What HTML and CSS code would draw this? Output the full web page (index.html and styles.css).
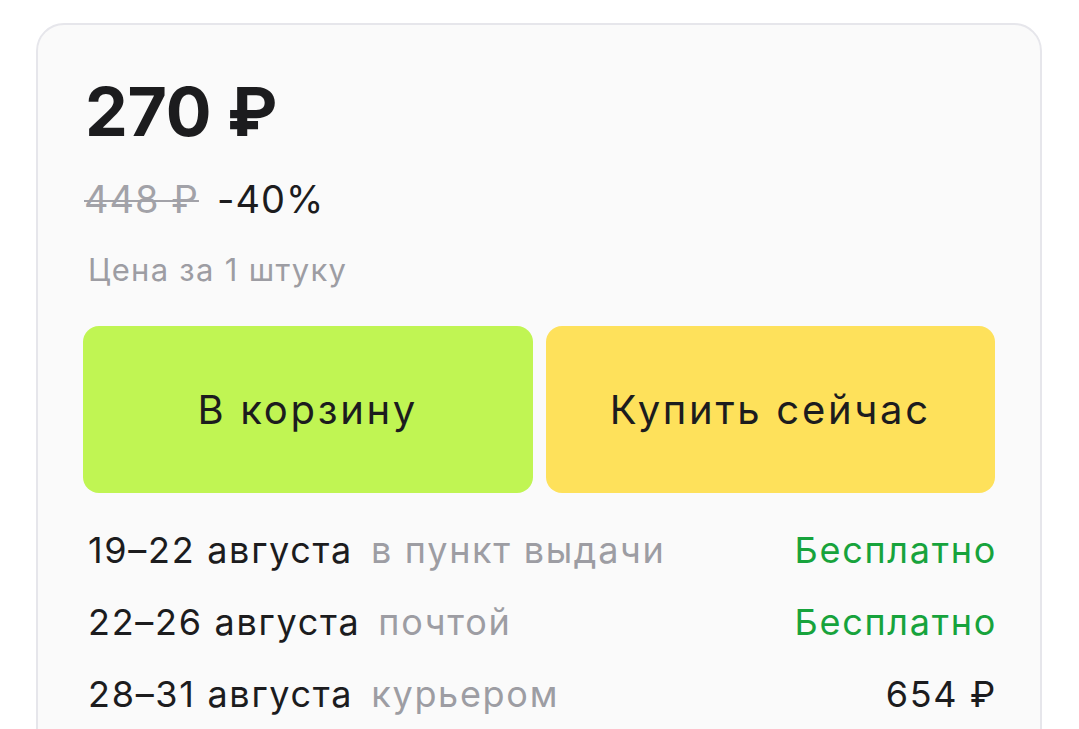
FILE: index.html
```html
<!DOCTYPE html>
<html lang="ru">
<head>
<meta charset="utf-8">
<title>Цена</title>
<link rel="stylesheet" href="styles.css">
</head>
<body>
<div class="card">
  <div class="price">270 ₽</div>
  <div class="old-row">
    <span class="old">448 ₽</span>
    <span class="discount">-40%</span>
  </div>
  <div class="unit">Цена за 1 штуку</div>
  <div class="buttons">
    <button class="btn btn-cart">В корзину</button>
    <button class="btn btn-buy">Купить сейчас</button>
  </div>
  <ul class="delivery">
    <li class="row"><span class="date">19–22 августа</span><span class="method">в пункт выдачи</span><span class="cost free">Бесплатно</span></li>
    <li class="row"><span class="date">22–26 августа</span><span class="method">почтой</span><span class="cost free">Бесплатно</span></li>
    <li class="row"><span class="date">28–31 августа</span><span class="method">курьером</span><span class="cost">654 ₽</span></li>
  </ul>
</div>
</body>
</html>
```

FILE: styles.css
```css
* { box-sizing: border-box; }
html, body {
  margin: 0;
  padding: 0;
  background: #ffffff;
  overflow: hidden;
}
body {
  font-family: Inter, "Noto Sans", sans-serif;
  color: #1c1c1e;
  padding: 23px 0 0 36px;
  height: 729px;
}
.card {
  width: 1006px;
  height: 760px;
  background: #fafafa;
  border: 2px solid #e6e6eb;
  border-radius: 28px;
  padding: 46px 45px 0 45px;
}
.price {
  font-size: 68px;
  font-weight: 700;
  line-height: 80px;
  letter-spacing: -0.3px;
  padding-left: 2px;
}
.old-row {
  margin-top: 25px;
  font-size: 38px;
  line-height: 46px;
  display: flex;
  gap: 18px;
  padding-left: 1px;
  letter-spacing: 1px;
}
.old {
  color: #a2a2a8;
  text-decoration: line-through;
  text-decoration-thickness: 2px;
}
.discount { color: #1c1c1e; }
.unit {
  margin-top: 29px;
  font-size: 31px;
  line-height: 38px;
  color: #9d9da3;
  padding-left: 5px;
  letter-spacing: 1.3px;
}
.buttons {
  margin-top: 37px;
  display: flex;
  gap: 13px;
}
.btn {
  flex: 1;
  height: 167px;
  border: none;
  border-radius: 16px;
  font-family: inherit;
  font-size: 40px;
  line-height: 48px;
  color: #1c1c1e;
  letter-spacing: 2.7px;
}
.btn-cart { background: #c0f553; }
.btn-buy { background: #fee15b; }
.delivery {
  list-style: none;
  margin: 21px 0 0 0;
  padding: 0;
}
.row {
  display: flex;
  align-items: baseline;
  font-size: 36px;
  line-height: 72px;
  padding-left: 5px;
  letter-spacing: 1.7px;
}
.date { color: #1c1c1e; }
.method {
  color: #9d9da3;
  margin-left: 18px;
}
.cost {
  margin-left: auto;
  margin-right: -2px;
  color: #1c1c1e;
}
.cost.free { color: #17a33c; }
```
